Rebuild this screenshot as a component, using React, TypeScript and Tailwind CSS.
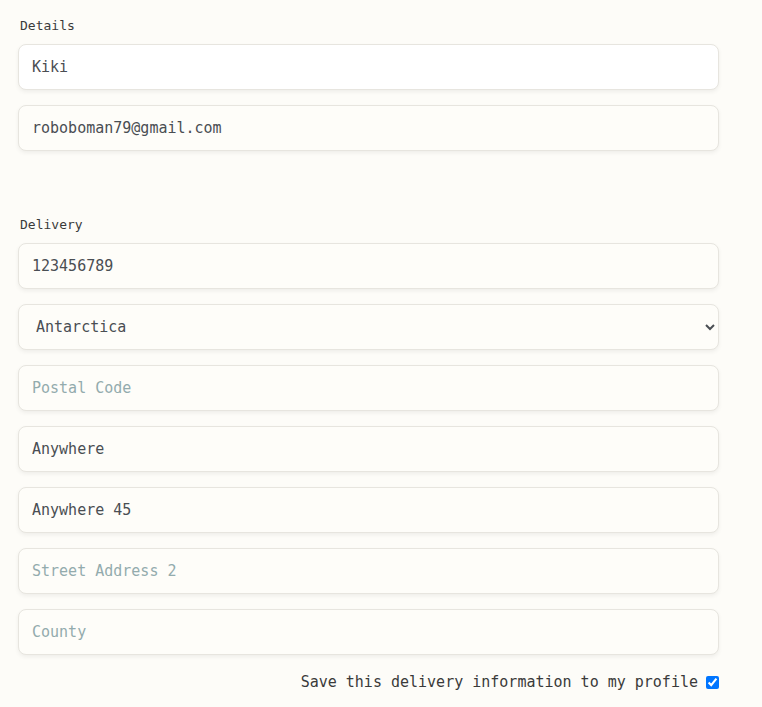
const inputBase =
  "block w-full h-[46px] rounded-lg border border-[#e7e5df] px-[13px] text-[15px] text-[#4a4e53] placeholder:text-[#93abad] shadow-[0_2px_4px_rgba(0,0,0,0.06)] outline-none";

function Field({ value, placeholder, focused }: { value?: string; placeholder?: string; focused?: boolean }) {
  return (
    <input
      type="text"
      defaultValue={value}
      placeholder={placeholder}
      autoFocus={focused}
      className={`${inputBase} ${focused ? "bg-white caret-[#333]" : "bg-[#fefdf9]"}`}
    />
  );
}

export default function App() {
  return (
    <div className="min-h-[707px] bg-[#fdfcf8] font-['DejaVu_Sans_Mono',monospace]">
      <div className="w-[701px] ml-[18px] pt-4 pb-4">
        <section>
          <label className="block text-[13px] leading-5 text-[#3a3a3a] mb-2 pl-[2px]">Details</label>
          <div className="flex flex-col gap-[15px]">
            <Field value="Kiki" focused />
            <Field value="roboboman79@gmail.com" />
          </div>
        </section>

        <section className="mt-16">
          <label className="block text-[13px] leading-5 text-[#3a3a3a] mb-2 pl-[2px]">Delivery</label>
          <div className="flex flex-col gap-[15px]">
            <Field value="123456789" />
            <select
              defaultValue="Antarctica"
              className="block w-full h-[46px] rounded-lg border border-[#e7e5df] bg-[#fefdf9] px-[13px] text-[15px] text-[#4a4e53] shadow-[0_2px_4px_rgba(0,0,0,0.06)] outline-none"
            >
              <option>Afghanistan</option>
              <option>Antarctica</option>
              <option>Argentina</option>
            </select>
            <Field placeholder="Postal Code" />
            <Field value="Anywhere" />
            <Field value="Anywhere 45" />
            <Field placeholder="Street Address 2" />
            <Field placeholder="County" />
          </div>
        </section>

        <div className="mt-[17px] h-5 flex items-center justify-end">
          <span className="text-[15px] leading-5 text-[#3a3a3a]">Save this delivery information to my profile</span>
          <input type="checkbox" defaultChecked className="ml-2 w-[13px] h-[13px]" />
        </div>
      </div>
    </div>
  );
}
